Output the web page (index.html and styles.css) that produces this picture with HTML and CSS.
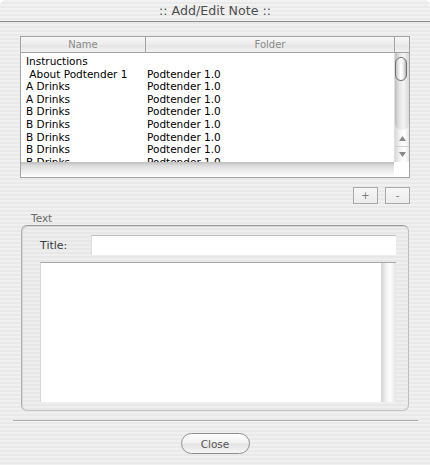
FILE: index.html
```html
<!DOCTYPE html>
<html lang="en">

<head>
    <meta charset="UTF-8">
    <title>Add/Edit Note</title>
    <link rel="stylesheet" href="styles.css">
</head>

<body>
    <div class="window">
        <div class="titlebar">:: Add/Edit Note ::</div>

        <div class="list">
            <div class="list-head">
                <div class="col-name">Name</div>
                <div class="col-folder">Folder</div>
                <div class="col-corner"></div>
            </div>
            <div class="list-main">
                <div class="rows">
                    <div class="row"><span class="c-name">Instructions</span><span class="c-folder"></span></div>
                    <div class="row"><span class="c-name">&nbsp;About Podtender 1</span><span class="c-folder">Podtender 1.0</span></div>
                    <div class="row"><span class="c-name">A Drinks</span><span class="c-folder">Podtender 1.0</span></div>
                    <div class="row"><span class="c-name">A Drinks</span><span class="c-folder">Podtender 1.0</span></div>
                    <div class="row"><span class="c-name">B Drinks</span><span class="c-folder">Podtender 1.0</span></div>
                    <div class="row"><span class="c-name">B Drinks</span><span class="c-folder">Podtender 1.0</span></div>
                    <div class="row"><span class="c-name">B Drinks</span><span class="c-folder">Podtender 1.0</span></div>
                    <div class="row"><span class="c-name">B Drinks</span><span class="c-folder">Podtender 1.0</span></div>
                    <div class="row"><span class="c-name">B Drinks</span><span class="c-folder">Podtender 1.0</span></div>
                </div>
                <div class="vscroll">
                    <div class="track">
                        <div class="thumb"></div>
                    </div>
                    <div class="arrow arrow-up">
                        <svg width="9" height="7" viewBox="0 0 9 7"><path d="M4.5 1 L8 6 L1 6 Z" fill="#8a8a8a"/></svg>
                    </div>
                    <div class="arrow arrow-down">
                        <svg width="9" height="7" viewBox="0 0 9 7"><path d="M1 1 L8 1 L4.5 6 Z" fill="#8a8a8a"/></svg>
                    </div>
                </div>
            </div>
            <div class="list-foot">
                <div class="hbar"></div>
                <div class="corner"></div>
            </div>
        </div>

        <div class="tools">
            <button class="sq-btn">+</button>
            <button class="sq-btn">-</button>
        </div>

        <div class="group-label">Text</div>
        <div class="group">
            <div class="field-row">
                <label class="field-label">Title:</label>
                <div class="field-input"></div>
            </div>
            <div class="textarea">
                <div class="text-body"></div>
                <div class="text-scroll"></div>
            </div>
        </div>

        <div class="separator"></div>

        <div class="footer">
            <button class="pill">Close</button>
        </div>
    </div>
</body>

</html>
```

FILE: styles.css
```css
* {
    box-sizing: border-box;
}

body {
    margin: 0;
    font-family: "DejaVu Sans", "Liberation Sans", sans-serif;
    color: #000;
}

.window {
    width: 430px;
    height: 465px;
    overflow: hidden;
    border-radius: 6px 6px 0 0;
    background: repeating-linear-gradient(#f0f0f0 0, #f0f0f0 2px, #e9e9e9 2px, #e9e9e9 4px);
}

.titlebar {
    height: 22px;
    line-height: 21px;
    text-align: center;
    font-size: 12.6px;
    color: #4e4e4e;
    border-bottom: 1px solid #8e8e8e;
    background: repeating-linear-gradient(#f2f2f2 0, #f2f2f2 2px, #eaeaea 2px, #eaeaea 4px);
}

/* list */

.list {
    margin: 14px 20px 0 20px;
    width: 390px;
    border: 1px solid #a3a3a3;
    background: white;
}

.list-head {
    display: flex;
    height: 16px;
    border-bottom: 1px solid #a3a3a3;
    font-size: 10px;
    line-height: 15px;
    color: #8a8a8a;
    background: linear-gradient(#f6f6f6, #ececec 50%, #e4e4e4 52%, #f1f1f1);
}

.col-name {
    width: 125px;
    text-align: center;
    border-right: 1px solid #a3a3a3;
}

.col-folder {
    width: 249px;
    text-align: center;
    border-right: 1px solid #a3a3a3;
}

.col-corner {
    flex: 1;
}

.list-main {
    display: flex;
    height: 109px;
}

.rows {
    width: 373px;
    overflow: hidden;
    padding-top: 2px;
    font-size: 10.5px;
}

.row {
    display: flex;
    height: 12.6px;
    line-height: 12.6px;
    white-space: nowrap;
}

.c-name {
    width: 126px;
    padding-left: 5px;
}

.vscroll {
    width: 15px;
    display: flex;
    flex-direction: column;
    border-left: 1px solid #e0e0e0;
    background: linear-gradient(90deg, #d8d8d8, #f7f7f7 40%, #ffffff 70%, #e6e6e6);
}

.track {
    height: 77px;
    position: relative;
    border-radius: 0 0 7px 7px;
    background: linear-gradient(90deg, #bdbdbd, #e4e4e4 30%, #f4f4f4 60%, #d9d9d9);
}

.thumb {
    position: absolute;
    left: 0;
    top: 4px;
    width: 12px;
    height: 24px;
    border: 1px solid #6f6f6f;
    border-radius: 6px;
    background: linear-gradient(90deg, #c7c7c7, #ffffff 45%, #f2f2f2 70%, #b5b5b5);
}

.arrow {
    height: 17px;
    display: flex;
    justify-content: center;
    align-items: center;
}

.arrow-up {
    border-bottom: 1px solid #d0d0d0;
}

.arrow-down {
    flex: 1;
}

.list-foot {
    display: flex;
    height: 15px;
}

.hbar {
    width: 373px;
    background: linear-gradient(#bdbdbd, #dcdcdc 25%, #f2f2f2 70%, #ffffff);
}

.corner {
    flex: 1;
    background: white;
}

/* plus / minus */

.tools {
    display: flex;
    justify-content: flex-end;
    gap: 7px;
    margin: 9px 20px 0 0;
}

.sq-btn {
    width: 25px;
    height: 17px;
    padding: 0;
    border: 1px solid #a9a9a9;
    background: linear-gradient(#f6f6f6, #ececec);
    color: #7a7a7a;
    font-family: "DejaVu Sans", sans-serif;
    font-size: 10px;
    line-height: 13px;
}

/* text group */

.group-label {
    margin: 7px 0 0 31px;
    height: 14px;
    font-size: 10.5px;
    line-height: 14px;
    color: #6a6a6a;
}

.group {
    margin: 0 0 0 21px;
    width: 388px;
    height: 186px;
    padding: 9px 12px 0 18px;
    border: 1px solid #a9a9a9;
    border-color: #9c9c9c #bcbcbc #c4c4c4 #b0b0b0;
    border-radius: 6px;
    background: repeating-linear-gradient(#eeeeee 0, #eeeeee 2px, #e7e7e7 2px, #e7e7e7 4px);
    box-shadow: inset 1px 1px 0 #d6d6d6;
}

.field-row {
    display: flex;
    align-items: center;
    height: 20px;
}

.field-label {
    width: 51px;
    font-size: 11px;
    color: #3c3c3c;
}

.field-input {
    flex: 1;
    height: 20px;
    background: white;
    border-top: 1px solid #bdbdbd;
    border-left: 1px solid #dcdcdc;
}

.textarea {
    display: flex;
    margin-top: 7px;
    height: 140px;
    background: white;
    border-top: 1px solid #a9a9a9;
    border-left: 1px solid #d6d6d6;
}

.text-body {
    flex: 1;
}

.text-scroll {
    width: 15px;
    background: linear-gradient(90deg, #d4d4d4, #f1f1f1 35%, #ffffff 60%, #e4e4e4);
}

/* bottom */

.separator {
    margin: 9px 12px 0 13px;
    height: 2px;
    border-top: 1px solid #a8a8a8;
    border-bottom: 1px solid #f8f8f8;
}

.footer {
    display: flex;
    justify-content: center;
    margin-top: 11px;
}

.pill {
    width: 69px;
    height: 21px;
    padding: 0;
    border: 1px solid #8f8f8f;
    border-radius: 11px;
    background: linear-gradient(#ffffff, #f1f1f1 45%, #e3e3e3 55%, #f6f6f6);
    color: #555;
    font-family: "DejaVu Sans", sans-serif;
    font-size: 10.5px;
}
```
